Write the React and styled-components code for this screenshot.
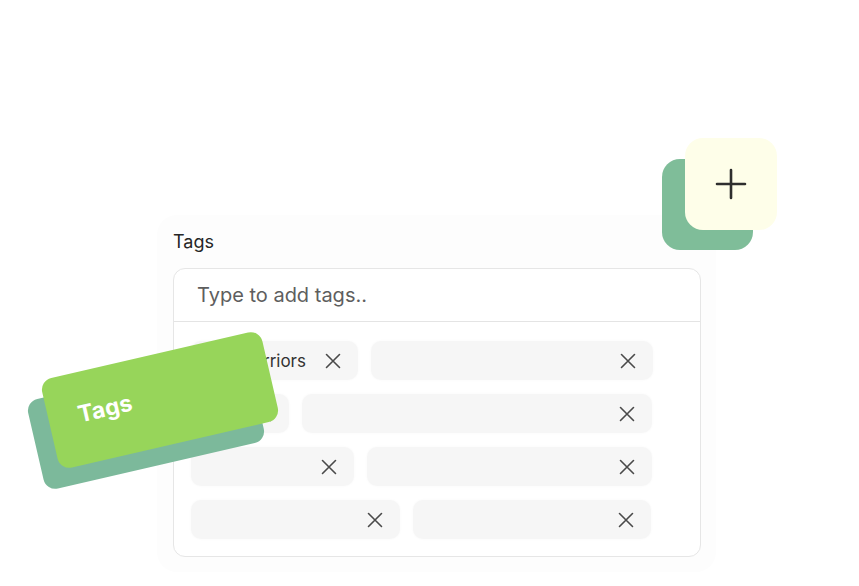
import React from "react";
import styled, { createGlobalStyle } from "styled-components";

const GlobalStyle = createGlobalStyle`
  html, body {
    margin: 0;
    padding: 0;
    background: #ffffff;
    font-family: Inter, "Noto Sans", sans-serif;
  }
`;

const Stage = styled.div`
  position: relative;
  width: 859px;
  height: 586px;
  overflow: hidden;
  padding: 215px 0 0 157px;
  box-sizing: border-box;
`;

const Card = styled.div`
  width: 559px;
  box-sizing: border-box;
  padding: 16px 15px 15px 16px;
  background: #fdfdfd;
  border-radius: 20px;
`;

const Label = styled.div`
  font-size: 18px;
  line-height: 22px;
  color: #262626;
  margin-bottom: 15px;
`;

const Box = styled.div`
  border: 1.5px solid #e6e6e6;
  border-radius: 12px;
  background: #ffffff;
  overflow: hidden;
`;

const Input = styled.input`
  display: block;
  width: 100%;
  box-sizing: border-box;
  height: 53px;
  border: none;
  border-bottom: 1.5px solid #e4e4e4;
  padding: 0 23px;
  font-family: Inter, "Noto Sans", sans-serif;
  font-size: 20px;
  color: #333;
  outline: none;
  background: transparent;

  &::placeholder {
    color: #5e5e5e;
  }
`;

const ChipList = styled.div`
  display: flex;
  flex-wrap: wrap;
  gap: 14px 13px;
  padding: 19px 17px 17px;
`;

const Chip = styled.div`
  display: flex;
  align-items: center;
  justify-content: flex-end;
  gap: 18px;
  box-sizing: border-box;
  width: ${(p) => p.$w}px;
  height: 39px;
  padding-right: 16px;
  background: #f6f6f6;
  border-radius: 10px;
  box-shadow: 0 0 3px rgba(0, 0, 0, 0.03);
  font-size: 17px;
  color: #333;
  white-space: nowrap;
  overflow: hidden;
`;

const Remove = styled.button`
  display: flex;
  align-items: center;
  justify-content: center;
  width: 18px;
  height: 18px;
  padding: 0;
  border: none;
  background: none;
  color: #4a4a4a;
  cursor: pointer;
  flex-shrink: 0;
`;

const Badge = styled.div`
  position: absolute;
  left: ${(p) => p.$x}px;
  top: ${(p) => p.$y}px;
  width: 226px;
  height: 92px;
  border-radius: 12px;
  background: ${(p) => p.$bg};
  transform: rotate(-13deg);
  display: flex;
  align-items: center;
  box-sizing: border-box;
  padding: 0 0 8px 30px;
  color: #ffffff;
  font-family: Inter, "Noto Sans", sans-serif;
  font-weight: 700;
  font-size: 23px;
  letter-spacing: 0.2px;
`;

const Square = styled.div`
  position: absolute;
  left: ${(p) => p.$x}px;
  top: ${(p) => p.$y}px;
  width: ${(p) => p.$size}px;
  height: ${(p) => p.$size}px;
  border-radius: 18px;
  background: ${(p) => p.$bg};
  display: flex;
  align-items: center;
  justify-content: center;
  color: #2e2e2e;
`;

const XIcon = () => (
  <svg width="16" height="16" viewBox="0 0 16 16" fill="none">
    <path d="M1.5 1.5L14.5 14.5M14.5 1.5L1.5 14.5" stroke="currentColor" strokeWidth="1.6" strokeLinecap="round" />
  </svg>
);

const PlusIcon = () => (
  <svg width="32" height="32" viewBox="0 0 32 32" fill="none">
    <path d="M16 2V30M2 16H30" stroke="currentColor" strokeWidth="2.6" strokeLinecap="round" />
  </svg>
);

const tags = [
  { w: 167, text: "Warriors" },
  { w: 282 },
  { w: 98 },
  { w: 350 },
  { w: 163 },
  { w: 285 },
  { w: 209 },
  { w: 238 },
];

export default function App() {
  return (
    <>
      <GlobalStyle />
      <Stage>
        <Card>
          <Label>Tags</Label>
          <Box>
            <Input placeholder="Type to add tags.." />
            <ChipList>
              {tags.map((t, i) => (
                <Chip key={i} $w={t.w}>
                  {t.text && <span>{t.text}</span>}
                  <Remove aria-label="remove">
                    <XIcon />
                  </Remove>
                </Chip>
              ))}
            </ChipList>
          </Box>
        </Card>

        <Badge $x={33} $y={375} $bg="#7cb99b" />
        <Badge $x={47} $y={354} $bg="#97d55a">Tags</Badge>

        <Square $x={662} $y={159} $size={91} $bg="#7fbd99" />
        <Square $x={685} $y={138} $size={92} $bg="#fefee9">
          <PlusIcon />
        </Square>
      </Stage>
    </>
  );
}
